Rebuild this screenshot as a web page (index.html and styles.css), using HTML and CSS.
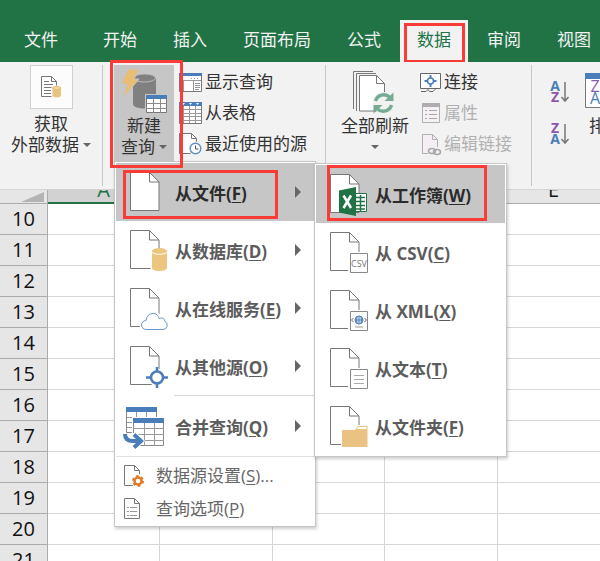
FILE: index.html
```html
<!DOCTYPE html>
<html lang="zh-CN">
<head>
    <meta charset="UTF-8">
    <meta name="viewport" content="width=device-width, initial-scale=1.0">
    <title>数据 - 新建查询</title>
    <link rel="stylesheet" href="styles.css">
</head>
<body>
    <!-- Shared icon shapes -->
    <svg class="defs" width="0" height="0">
        <symbol id="page" viewBox="0 0 38 42" overflow="visible">
            <path d="M.5 1.500h19l9.500 9.500v28.500H.5z" fill="#fff" stroke="#777"/>
            <path d="M19.500 1.500v9.500H29" fill="none" stroke="#777"/>
        </symbol>
        <symbol id="small-page" viewBox="0 0 20 22" overflow="visible">
            <path d="M.5.500h10l5 5v15H.5z" fill="#fff" stroke="#777"/>
            <path d="M10.500.500v5h5" fill="none" stroke="#777"/>
        </symbol>
    </svg>

    <nav class="tabs">
        <a class="tab tab-file" href="#">文件</a>
        <a class="tab" href="#">开始</a>
        <a class="tab" href="#">插入</a>
        <a class="tab" href="#">页面布局</a>
        <a class="tab" href="#">公式</a>
        <a class="tab active" href="#">数据<span class="mark mark-tab"></span></a>
        <a class="tab" href="#">审阅</a>
        <a class="tab" href="#">视图</a>
    </nav>

    <div class="ribbon">
        <div class="group group-get">
            <button class="big-btn">
                <span class="icon-box">
                    <svg width="20" height="22" viewBox="0 0 20 22">
                        <path d="M.5.500h10l5 5v15H.5z" fill="#fff" stroke="#777"/>
                        <path d="M10.500.500v5h5M3 5.500h5M3 8.500h9M3 11.500h8M3 14.500h7M3 17.500h7" fill="none" stroke="#777"/>
                        <path d="M10.500 9.500h9.500V22h-9.500z" fill="#fcfcfc"/>
                        <path d="M11.500 12v7.500c0 2.500 8.500 2.500 8.500 0V12z" fill="#eac282"/>
                        <ellipse cx="15.700" cy="12" rx="4.200" ry="1.500" fill="#f3dbae" stroke="#e6b76d"/>
                    </svg>
                </span>
                <span>获取</span>
                <span class="with-arrow">外部数据<i class="arrow-down"></i></span>
            </button>
        </div>

        <div class="group group-query">
            <div class="dropdown">
                <button class="big-btn pressed">
                    <svg width="60" height="50" viewBox="0 0 60 50">
                        <path d="M19 13v26c0 6 23 6 23 0V13z" fill="#808080"/>
                        <ellipse cx="30.500" cy="13" rx="11" ry="4" fill="#808080" stroke="#bcbcbc"/>
                        <path d="M14 4h11l-5 10h5L9 33l4-14H7z" fill="#eabd77" stroke="#c6c6c6"/>
                        <path d="M31 29h23v21H31z" fill="#c6c6c6"/>
                        <path d="M32.500 30.500h20v17h-20z" fill="#fff" stroke="#777"/>
                        <path d="M32 30h21v4H32z" fill="#4a7ebb"/>
                        <path d="M32 38.500h21M32 43.500h21M39.500 34v14M46.500 34v14" stroke="#8b8b8b"/>
                    </svg>
                    <span>新建</span>
                    <span class="with-arrow">查询<i class="arrow-down"></i></span>
                </button>

                <ul class="menu">
                    <li>
                        <button class="item selected">
                            <svg width="38" height="42"><use href="#page"/></svg>
                            <span>从文件(<u>F</u>)</span>
                            <i class="arrow-right"></i>
                            <span class="mark mark-file"></span>
                        </button>
                        <ul class="menu submenu">
                            <li>
                                <button class="item selected">
                                    <svg width="38" height="42" viewBox="0 0 38 42">
                                        <use href="#page" width="38" height="42"/>
                                        <path d="M24.500 20.500h12v18h-12z" fill="#fff" stroke="#217346"/>
                                        <path d="M26 24.500h9M26 28.500h9M26 32.500h9M26 36h9M30.500 22v16" stroke="#217346" stroke-width="1.500"/>
                                        <path d="M9 17.500l17-3.500v29L9 39.500z" fill="#217346"/>
                                        <path d="M13.500 22.500l7.500 12.500M21 22.500L13.500 35" stroke="#fff" stroke-width="2.500"/>
                                    </svg>
                                    <span>从工作簿(<u>W</u>)</span>
                                    <span class="mark mark-workbook"></span>
                                </button>
                            </li>
                            <li>
                                <button class="item">
                                    <svg width="38" height="42" viewBox="0 0 38 42">
                                        <use href="#page" width="38" height="42"/>
                                        <path d="M18 21h20v21H18z" fill="#fff"/>
                                        <path d="M20.500 22.500h17v19h-17z" fill="#fff" stroke="#888"/>
                                        <text x="29" y="36" class="csv-text">CSV</text>
                                    </svg>
                                    <span>从 CSV(<u>C</u>)</span>
                                </button>
                            </li>
                            <li>
                                <button class="item">
                                    <svg width="38" height="42" viewBox="0 0 38 42">
                                        <use href="#page" width="38" height="42"/>
                                        <path d="M18 21h20v21H18z" fill="#fff"/>
                                        <path d="M20.500 22.500h17v19h-17z" fill="#fff" stroke="#888"/>
                                        <circle cx="29" cy="31" r="4" fill="#dce8f4" stroke="#4a7ebb"/>
                                        <path d="M25 31h8M29 27v8M27 28q-1 3 0 6M31 28q1 3 0 6" fill="none" stroke="#4a7ebb"/>
                                        <path d="M23.500 29l-2 2 2 2M34.500 29l2 2-2 2" fill="none" stroke="#666"/>
                                        <path d="M25 37h8v2h-8z" fill="#ccc"/>
                                    </svg>
                                    <span>从 XML(<u>X</u>)</span>
                                </button>
                            </li>
                            <li>
                                <button class="item">
                                    <svg width="38" height="42" viewBox="0 0 38 42">
                                        <use href="#page" width="38" height="42"/>
                                        <path d="M18 21h20v21H18z" fill="#fff"/>
                                        <path d="M20.500 22.500h17v19h-17z" fill="#fff" stroke="#888"/>
                                        <path d="M24 28.500h10M24 32.500h10M24 36.500h10" stroke="#aaa"/>
                                    </svg>
                                    <span>从文本(<u>T</u>)</span>
                                </button>
                            </li>
                            <li>
                                <button class="item">
                                    <svg width="38" height="42" viewBox="0 0 38 42">
                                        <use href="#page" width="38" height="42"/>
                                        <path d="M11 20h27v22H11z" fill="#fff"/>
                                        <path d="M12 25h13l3-4h9.500v21H12z" fill="#eac282"/>
                                        <path d="M27 24l1.500-2h8v2z" fill="#fff"/>
                                    </svg>
                                    <span>从文件夹(<u>F</u>)</span>
                                </button>
                            </li>
                        </ul>
                    </li>
                    <li>
                        <button class="item">
                            <svg width="38" height="42" viewBox="0 0 38 42">
                                <use href="#page" width="38" height="42"/>
                                <path d="M20.500 19H38v23H20.500z" fill="#fff"/>
                                <path d="M22 22v17c0 4 15 4 15 0V22z" fill="#ecc67f"/>
                                <ellipse cx="29.500" cy="22" rx="7.500" ry="3" fill="#ecc67f"/>
                                <path d="M22 23c1 3 14 3 15 0" fill="none" stroke="#fff"/>
                            </svg>
                            <span>从数据库(<u>D</u>)</span>
                            <i class="arrow-right"></i>
                        </button>
                    </li>
                    <li>
                        <button class="item">
                            <svg width="38" height="42" viewBox="0 0 38 42">
                                <use href="#page" width="38" height="42"/>
                                <path d="M16 42.500a4.500 4.500 0 0 1 0-9q1-7 7-7 5 0 7 5 4-1 5 3 3 1 2 5-1 3-4 3z" fill="#fff" stroke="#fff" stroke-width="4"/>
                                <path d="M16 42.500a4.500 4.500 0 0 1 0-9q1-7 7-7 5 0 6 5 5-2 6 3 3 1 2 5-1 3-4 3z" fill="#fff" stroke="#6c98c8"/>
                            </svg>
                            <span>从在线服务(<u>E</u>)</span>
                            <i class="arrow-right"></i>
                        </button>
                    </li>
                    <li>
                        <button class="item">
                            <svg width="38" height="42" viewBox="0 0 38 42">
                                <use href="#page" width="38" height="42"/>
                                <circle cx="27" cy="32.500" r="9" fill="#fff"/>
                                <circle cx="27" cy="32.500" r="6" fill="#fff" stroke="#4a7ebb" stroke-width="2.500"/>
                                <path d="M27 22v5M27 38v5M16 32.500h5M33 32.500h5" stroke="#4a7ebb" stroke-width="2.500"/>
                            </svg>
                            <span>从其他源(<u>O</u>)</span>
                            <i class="arrow-right"></i>
                        </button>
                    </li>
                    <li class="split">
                        <button class="item item-merge">
                            <svg width="38" height="42" viewBox="0 0 38 42">
                                <path d="M-3.500 3.500h30v24h-30z" fill="#fff" stroke="#888"/>
                                <path d="M-3 12.500h10M-3 17.500h10M-3 22.500h10M6.500 7v20M16.500 7v6" stroke="#999"/>
                                <path d="M-4 2h31v5H-4z" fill="#4a7ebb"/>
                                <path d="M2 12h33v33H2z" fill="#fff"/>
                                <path d="M3.500 13.500h30v27h-30z" fill="#fff" stroke="#888"/>
                                <path d="M3 23.500h31M3 29.500h31M3 35.500h31M14.500 18v23M24.500 18v23" stroke="#999"/>
                                <path d="M3 13h31v5H3z" fill="#4a7ebb"/>
                                <path d="M-7 28h14l8 8-10 10H-7z" fill="#fff"/>
                                <path d="M-5 29q0 7 8 7h8M4 29.500l7 6.500-7 6.500" fill="none" stroke="#4a7ebb" stroke-width="4"/>
                            </svg>
                            <span>合并查询(<u>Q</u>)</span>
                            <i class="arrow-right"></i>
                        </button>
                    </li>
                    <li class="split-full">
                        <button class="item-small">
                            <svg width="20" height="22" viewBox="0 0 20 22">
                                <use href="#small-page" width="20" height="22"/>
                                <circle cx="14" cy="16" r="7" fill="#fff"/>
                                <circle cx="14" cy="16" r="3.500" fill="#fff" stroke="#e07b28" stroke-width="2.500"/>
                                <circle cx="14" cy="16" r="5" fill="none" stroke="#e07b28" stroke-width="2" stroke-dasharray="2.600 2.636"/>
                            </svg>
                            <span>数据源设置(<u>S</u>)...</span>
                        </button>
                    </li>
                    <li>
                        <button class="item-small">
                            <svg width="20" height="22" viewBox="0 0 20 22">
                                <use href="#small-page" width="20" height="22"/>
                                <path d="M3 9.500h2M3 13.500h2M3 17.500h2M6 9.500h7M6 13.500h7M6 17.500h7" stroke="#999"/>
                            </svg>
                            <span>查询选项(<u>P</u>)</span>
                        </button>
                    </li>
                </ul>
                <span class="mark mark-query"></span>
            </div>

            <div class="small-btns">
                <button class="small-btn">
                    <svg width="23" height="22" viewBox="0 0 23 22">
                        <path d="M.5 2.500h22v18H.5z" fill="#fff" stroke="#777"/>
                        <path d="M0 2h23v3H0z" fill="#4a7ebb"/>
                        <path d="M1 9.500h21M14.500 10v10M4.500 10v10" stroke="#999"/>
                        <path d="M12 7.500h8" stroke="#999" stroke-dasharray="1 2"/>
                        <path d="M16 12.500h5M16 14.500h5M16 16.500h5M16 18.500h4" stroke="#999"/>
                    </svg>
                    <span>显示查询</span>
                </button>
                <button class="small-btn">
                    <svg width="23" height="22" viewBox="0 0 23 22">
                        <path d="M.5.500h22v21H.5z" fill="#fff" stroke="#777"/>
                        <path d="M0 0h23v4H0z" fill="#4a7ebb"/>
                        <path d="M3 1h3L4.500 3zM10 1h3l-1.500 2zM17 1h3l-1.500 2z" fill="#fff"/>
                        <path d="M1 7.500h21M1 11.500h21M1 14.500h21M1 18.500h21M4.500 4v17M10.500 4v17M16.500 4v17" stroke="#999"/>
                    </svg>
                    <span>从表格</span>
                </button>
                <button class="small-btn">
                    <svg width="23" height="22" viewBox="0 0 23 22">
                        <path d="M.5.500h12l5 5v15H.5z" fill="#fff" stroke="#777"/>
                        <path d="M12.500.500v5h5" fill="none" stroke="#777"/>
                        <circle cx="16.500" cy="15.500" r="7" fill="#f2f2f2"/>
                        <circle cx="16.500" cy="15.500" r="5.300" fill="#fff" stroke="#5f90c6" stroke-width="1.400"/>
                        <path d="M16.500 12.500v3.500h3" fill="none" stroke="#555"/>
                    </svg>
                    <span>最近使用的源</span>
                </button>
            </div>
        </div>

        <div class="group group-refresh">
            <button class="big-btn">
                <svg width="60" height="50" viewBox="0 0 60 50">
                    <path d="M8.500 44V6.500H28M11.500 46V8.500H31" fill="none" stroke="#777"/>
                    <path d="M14.500 10.500h17l8 8v27.500h-25z" fill="#fff" stroke="#777"/>
                    <path d="M31.500 10.500v8h8" fill="none" stroke="#777"/>
                    <circle cx="38.500" cy="38" r="11" fill="#f2f2f2"/>
                    <path d="M30.500 36a8.500 8.500 0 0 1 14-4M46.500 40a8.500 8.500 0 0 1-14 4" fill="none" stroke="#76ab93" stroke-width="3.400"/>
                    <path d="M48.500 27.500V36h-9zM28.500 48.500V40h9z" fill="#76ab93"/>
                </svg>
                <span>全部刷新</span>
                <span class="with-arrow"><i class="arrow-down"></i></span>
            </button>
            <div class="small-btns">
                <button class="small-btn">
                    <svg width="21" height="22" viewBox="0 0 21 22">
                        <path d="M.5 2.500h20v15H.5z" fill="#fff" stroke="#666"/>
                        <path d="M1 20.500h5l2-2 1.500 2h3.500l3-3" fill="none" stroke="#666"/>
                        <circle cx="10.500" cy="10" r="3" fill="none" stroke="#4a7ebb" stroke-width="1.500"/>
                        <path d="M10.500 4v3M10.500 13v3M4.500 10h3M13.500 10h3" stroke="#4a7ebb" stroke-width="2"/>
                    </svg>
                    <span>连接</span>
                </button>
                <button class="small-btn" disabled>
                    <svg width="21" height="22" viewBox="0 0 21 22">
                        <path d="M2.500 1.500h17v19h-17z" fill="#f5f1f5" stroke="#b0b0b0"/>
                        <path d="M2 1h18v4H2z" fill="#b0acb0"/>
                        <path d="M9 8.500h8M9 12.500h8M9 16.500h8M5 8.500h2M5 12.500h2M5 16.500h2" stroke="#a8a8a8"/>
                    </svg>
                    <span>属性</span>
                </button>
                <button class="small-btn" disabled>
                    <svg width="21" height="22" viewBox="0 0 21 22">
                        <path d="M2.500 1.500h10l5 5v14h-15z" fill="#f5eff5" stroke="#b0b0b0"/>
                        <path d="M12.500 1.500v5h5" fill="none" stroke="#b0b0b0"/>
                        <path d="M8 14h13v8H8z" fill="#f2f2f2"/>
                        <ellipse cx="12" cy="18" rx="3.500" ry="2.500" fill="none" stroke="#a8a8a8" stroke-width="1.500"/>
                        <ellipse cx="17" cy="19" rx="3.500" ry="2.500" fill="none" stroke="#a8a8a8" stroke-width="1.500"/>
                    </svg>
                    <span>编辑链接</span>
                </button>
            </div>
        </div>

        <div class="group group-sort">
            <div class="sort-btns">
                <button class="sort-btn" aria-label="升序">
                    <svg width="20" height="24" viewBox="0 0 20 24">
                        <text x="5" y="11" class="az az-blue">A</text>
                        <text x="5" y="22" class="az az-purple">Z</text>
                        <path d="M15 2v19M11.500 17l3.500 4 3.500-4" fill="none" stroke="#777" stroke-width="1.500"/>
                    </svg>
                </button>
                <button class="sort-btn" aria-label="降序">
                    <svg width="20" height="24" viewBox="0 0 20 24">
                        <text x="5" y="11" class="az az-purple">Z</text>
                        <text x="5" y="22" class="az az-blue">A</text>
                        <path d="M15 2v19M11.500 17l3.500 4 3.500-4" fill="none" stroke="#777" stroke-width="1.500"/>
                    </svg>
                </button>
            </div>
            <button class="big-btn">
                <svg width="42" height="50" viewBox="0 0 42 50">
                    <path d="M.5 8.500h41v34H.5z" fill="#fff" stroke="#777"/>
                    <path d="M0 8h42v6H0z" fill="#4a7ebb"/>
                    <text x="10" y="27" class="az az-big az-purple">Z</text>
                    <text x="10" y="39" class="az az-big az-blue">A</text>
                    <text x="30" y="27" class="az az-big az-blue">A</text>
                    <text x="30" y="39" class="az az-big az-purple">Z</text>
                </svg>
                <span>排序</span>
            </button>
        </div>
    </div>

    <div class="sheet">
        <table>
            <thead>
                <tr>
                    <th class="corner"><div><i class="triangle"></i></div></th>
                    <th class="current"><div>A</div></th>
                    <th><div>B</div></th>
                    <th><div>C</div></th>
                    <th><div>D</div></th>
                    <th><div>E</div></th>
                    <th><div>F</div></th>
                    <th><div>G</div></th>
                    <th><div>H</div></th>
                </tr>
            </thead>
            <tbody>
                <tr><th>10</th><td></td><td></td><td></td><td></td><td></td><td></td><td></td><td></td></tr>
                <tr><th>11</th><td></td><td></td><td></td><td></td><td></td><td></td><td></td><td></td></tr>
                <tr><th>12</th><td></td><td></td><td></td><td></td><td></td><td></td><td></td><td></td></tr>
                <tr><th>13</th><td></td><td></td><td></td><td></td><td></td><td></td><td></td><td></td></tr>
                <tr><th>14</th><td></td><td></td><td></td><td></td><td></td><td></td><td></td><td></td></tr>
                <tr><th>15</th><td></td><td></td><td></td><td></td><td></td><td></td><td></td><td></td></tr>
                <tr><th>16</th><td></td><td></td><td></td><td></td><td></td><td></td><td></td><td></td></tr>
                <tr><th>17</th><td></td><td></td><td></td><td></td><td></td><td></td><td></td><td></td></tr>
                <tr><th>18</th><td></td><td></td><td></td><td></td><td></td><td></td><td></td><td></td></tr>
                <tr><th>19</th><td></td><td></td><td></td><td></td><td></td><td></td><td></td><td></td></tr>
                <tr><th>20</th><td></td><td></td><td></td><td></td><td></td><td></td><td></td><td></td></tr>
                <tr><th>21</th><td></td><td></td><td></td><td></td><td></td><td></td><td></td><td></td></tr>
            </tbody>
        </table>
    </div>
</body>
</html>
```
FILE: styles.css
```css
* {
    margin: 0;
    padding: 0;
    box-sizing: border-box;
}

body {
    display: flex;
    flex-direction: column;
    height: 100vh;
    overflow: hidden;
    background: #fff;
    color: #333;
    font-family: "Open Sans", "Noto Sans CJK SC", sans-serif;
    font-size: 17px;
    line-height: 21px;
    white-space: nowrap;
}

button {
    border: none;
    background: none;
    color: inherit;
    font: inherit;
    cursor: pointer;
}

svg {
    display: block;
    flex-shrink: 0;
    overflow: visible;
}

.defs {
    position: absolute;
}

/* Tabs */
.tabs {
    display: flex;
    flex-shrink: 0;
    gap: 2px;
    padding: 20px 7px 0;
    background: #217346;
}

.tab {
    position: relative;
    flex-shrink: 0;
    height: 42px;
    padding: 9px 17px;
    color: #f2f2f2;
    text-decoration: none;
}

.tab-file {
    margin-right: 9px;
}

.tab.active {
    background: #f2f2f2;
    color: #217346;
}

/* Ribbon */
.ribbon {
    position: relative;
    z-index: 1;
    display: flex;
    flex-shrink: 0;
    padding: 3px 0;
    border-bottom: 1px solid #d4d4d4;
    background: #f2f2f2;
}

.group {
    display: flex;
    flex-shrink: 0;
    align-items: flex-start;
    height: 121px;
    border-right: 1px solid #c8c8c8;
}

.group-get {
    padding: 0 11px;
}

.group-query {
    gap: 5px;
    padding: 0 18px 0 11px;
}

.group-refresh {
    gap: 11px;
    padding: 0 19px 0 15px;
}

.group-sort {
    gap: 15px;
    padding: 0 18px;
}

.big-btn {
    display: flex;
    flex-direction: column;
    align-items: center;
}

.big-btn.pressed {
    height: 96px;
    background: #c6c6c6;
}

.icon-box {
    display: flex;
    align-items: center;
    justify-content: center;
    width: 43px;
    height: 44px;
    margin-bottom: 4px;
    border: 1px solid #d0d0d0;
    background: #fcfcfc;
}

.with-arrow {
    display: flex;
    align-items: center;
    gap: 4px;
    height: 21px;
}

.arrow-down {
    border: 4px solid transparent;
    border-top-color: #666;
    border-bottom: none;
}

.arrow-right {
    margin-left: auto;
    border: 6px solid transparent;
    border-left-color: #666;
    border-right: none;
}

.small-btns {
    display: flex;
    flex-direction: column;
    padding-top: 1px;
}

.small-btn {
    display: flex;
    align-items: center;
    gap: 3px;
    height: 31px;
}

.small-btn:disabled {
    color: #b1b1b1;
}

.sort-btns {
    display: flex;
    flex-direction: column;
    gap: 18px;
    padding-top: 15px;
}

.az {
    font-size: 14px;
    font-weight: 700;
    text-anchor: middle;
}

.az-big {
    font-size: 16px;
    font-weight: 400;
}

.az-blue {
    fill: #4a7ebb;
}

.az-purple {
    fill: #8e57ae;
}

.csv-text {
    fill: #777;
    font-size: 9px;
    font-weight: 400;
    text-anchor: middle;
}

/* Menus */
.dropdown {
    position: relative;
}

.menu {
    position: absolute;
    top: 96px;
    left: 0;
    width: 202px;
    padding: 1px;
    border: 1px solid #c6c6c6;
    background: #fff;
    box-shadow: 1px 2px 3px rgba(0, 0, 0, 0.2);
    list-style: none;
}

.submenu {
    top: 1px;
    left: 199px;
    width: 193px;
}

.item {
    position: relative;
    display: flex;
    align-items: center;
    gap: 7px;
    width: 100%;
    height: 58px;
    padding: 0 13px 0 14px;
    color: #5c5c5c;
    font-weight: 700;
}

.item.selected {
    background: #c6c6c6;
    color: #2b2b2b;
}

.item > span {
    padding-top: 3px;
}

.split::before {
    content: "";
    display: block;
    height: 1px;
    margin-left: 58px;
    background: #d9d9d9;
}

.item-merge {
    height: 60px;
}

.split-full {
    padding-top: 2px;
    border-top: 1px solid #e1e1e1;
}

.item-small {
    display: flex;
    align-items: center;
    gap: 12px;
    width: 100%;
    height: 33px;
    padding: 0 8px;
    color: #666;
}

u {
    text-underline-offset: 2px;
}

/* Red highlight frames */
.mark {
    position: absolute;
    border: 3px solid #fb3b38;
    pointer-events: none;
}

.mark-tab {
    inset: 3px 3px -1px 4px;
}

.mark-query {
    inset: -5px -9px -7px -4px;
}

.mark-file {
    inset: 7px 36px 2px 7px;
}

.mark-workbook {
    inset: 0 18px 2px 11px;
}

/* Worksheet */
.sheet {
    flex: 1;
    min-height: 0;
    overflow: hidden;
}

table {
    width: 947px;
    border-collapse: separate;
    border-spacing: 0;
    table-layout: fixed;
}

th,
td {
    width: 113px;
    height: 31px;
    border-right: 1px solid #d6d6d6;
    border-bottom: 1px solid #d6d6d6;
}

th:nth-child(even),
td:nth-child(even) {
    width: 112px;
}

th {
    background: #e6e6e6;
    color: #111;
    font-size: 20px;
    font-weight: 400;
}

th:first-child {
    width: 48px;
    border-color: #ababab;
}

tbody th {
    padding-bottom: 1px;
    border-bottom-color: #c4c4c4;
}

thead th {
    height: 14px;
    border-bottom-color: #ababab;
}

thead div {
    height: 13px;
    overflow: hidden;
    line-height: 0;
}

thead .current {
    border-bottom: 2px solid #217346;
    background: #d2d2d2;
    color: #217346;
}

.current div {
    height: 12px;
}

.corner div {
    display: flex;
    justify-content: flex-end;
    padding: 1px 3px;
}

.triangle {
    border-bottom: 10px solid #b4b4b4;
    border-left: 23px solid transparent;
}
```
